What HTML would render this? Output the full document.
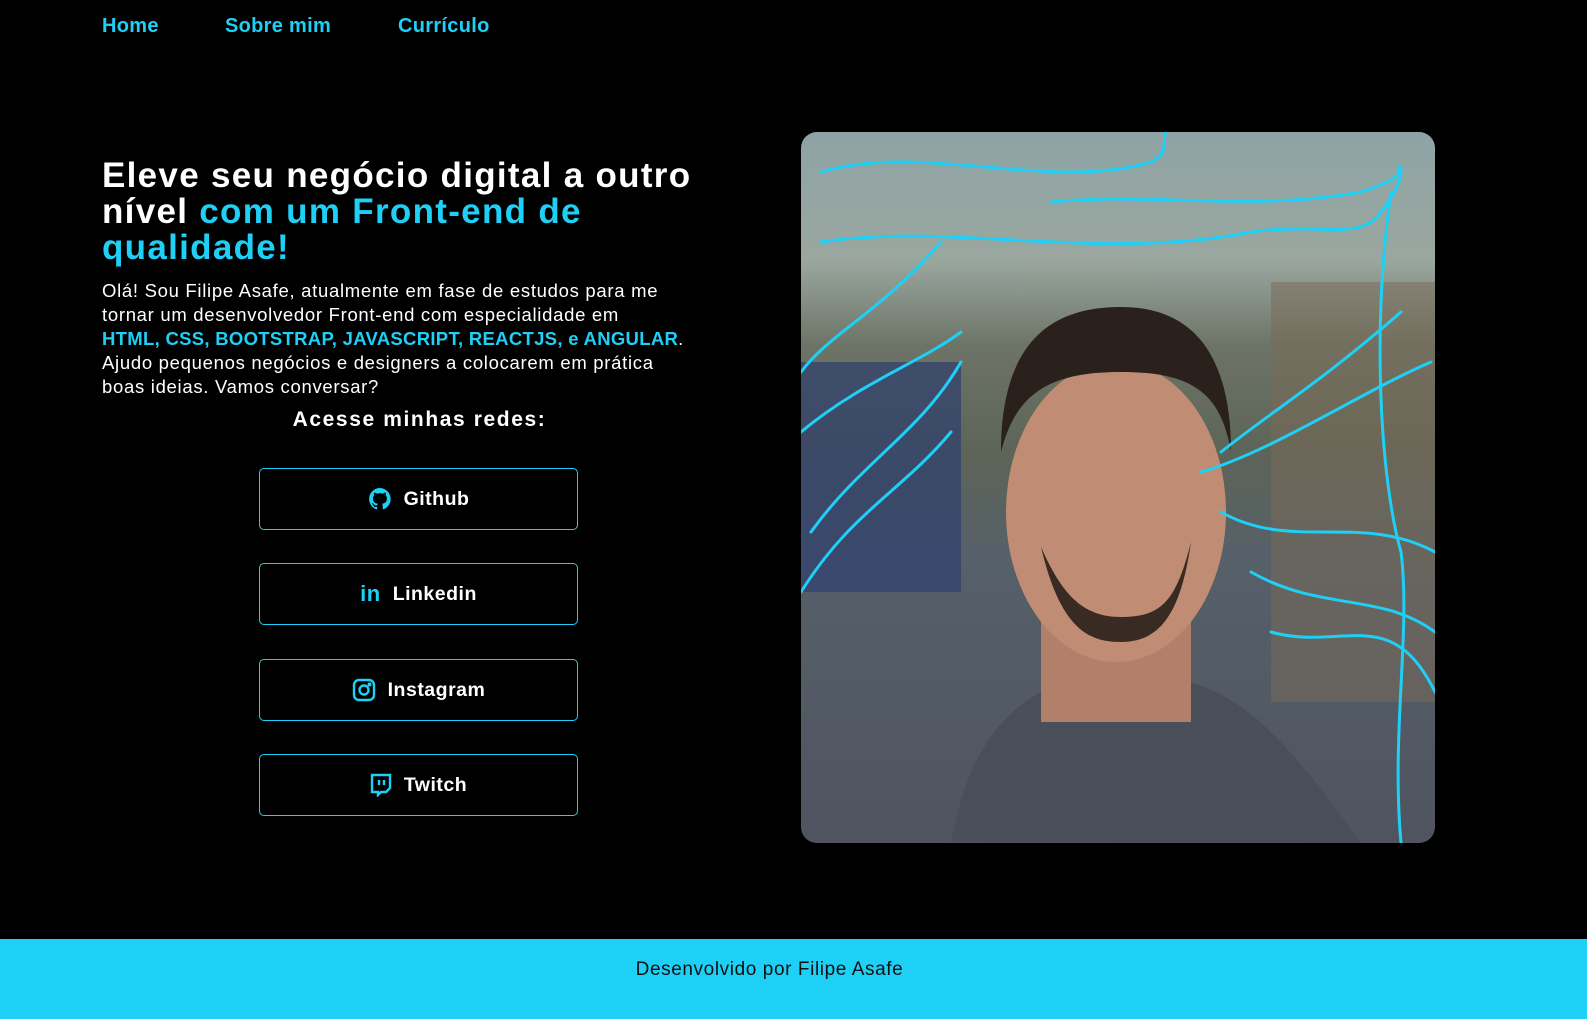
<!DOCTYPE html>
<html><head><meta charset="utf-8"><style>
*{margin:0;padding:0;box-sizing:border-box}
html{background:#1fd0f6}
body{width:1587px;height:995px;background:#000;font-family:"Liberation Sans",sans-serif;color:#fff;position:relative;overflow:hidden}
.nav a{position:absolute;top:15px;color:#1fd0f6;font-weight:bold;font-size:20px;text-decoration:none;letter-spacing:0.3px}
h1{position:absolute;left:102px;top:158px;font-size:35px;line-height:36px;font-weight:900;width:640px;letter-spacing:1.3px}
.c{color:#1fd0f6}
p.t{position:absolute;left:102px;top:279px;font-size:18.5px;line-height:24px;width:640px;letter-spacing:0.7px;white-space:nowrap}
h2{position:absolute;left:102px;width:635px;text-align:center;top:408px;font-size:21px;font-weight:bold;letter-spacing:1.6px}
.btn{position:absolute;left:259px;width:319px;height:62px;border:1.5px solid #1fd0f6;border-radius:5px;display:flex;align-items:center;justify-content:center;font-weight:bold;font-size:19.5px;gap:12px;letter-spacing:0.5px}
.photo{position:absolute;left:801px;top:132px;width:634px;height:711px;border-radius:16px;overflow:hidden;
background:linear-gradient(180deg,#8ea3a6 0%,#9aa79f 18%,#6d7467 30%,#5d6458 45%,#566069 60%,#4f5460 100%)}
footer{position:absolute;left:0;top:939px;height:80px;width:1587px;background:#1fd0f6;color:#111;text-align:center;font-size:19px;line-height:62px;padding-right:48px;letter-spacing:0.6px}
</style></head><body>
<div class="nav"><a style="left:102px">Home</a><a style="left:225px">Sobre mim</a><a style="left:398px">Currículo</a></div>
<h1>Eleve seu negócio digital a outro nível <span class="c">com um Front-end de qualidade!</span></h1>
<p class="t">Olá! Sou Filipe Asafe, atualmente em fase de estudos para me<br>tornar um desenvolvedor Front-end com especialidade em<br><b class="c" style="letter-spacing:0.3px">HTML, CSS, BOOTSTRAP, JAVASCRIPT, REACTJS, e ANGULAR</b>.<br>Ajudo pequenos negócios e designers a colocarem em prática<br>boas ideias. Vamos conversar?</p>
<h2>Acesse minhas redes:</h2>
<div class="btn" style="top:468px"><svg width="24" height="24" viewBox="0 0 24 24"><path fill="#1fd0f6" d="M12 1a11 11 0 0 0-3.5 21.4c.5.1.7-.2.7-.5v-2c-3 .7-3.7-1.3-3.7-1.3-.5-1.2-1.2-1.6-1.2-1.6-1-.7.1-.7.1-.7 1.1.1 1.7 1.1 1.7 1.1 1 1.7 2.6 1.2 3.2.9.1-.7.4-1.2.7-1.5-2.4-.3-5-1.2-5-5.4 0-1.2.4-2.2 1.1-2.9-.1-.3-.5-1.4.1-2.9 0 0 .9-.3 3 1.1a10 10 0 0 1 5.5 0c2.1-1.4 3-1.1 3-1.1.6 1.5.2 2.6.1 2.9.7.8 1.1 1.7 1.1 2.9 0 4.2-2.6 5.1-5 5.4.4.3.8 1 .8 2v3c0 .3.2.6.8.5A11 11 0 0 0 12 1z"/></svg>Github</div>
<div class="btn" style="top:563px"><span style="color:#1fd0f6;font-size:22px;font-weight:900">in</span>Linkedin</div>
<div class="btn" style="top:659px"><svg width="24" height="24" viewBox="0 0 24 24" fill="none" stroke="#1fd0f6" stroke-width="2.4"><rect x="2" y="2" width="20" height="20" rx="5"/><circle cx="12" cy="12" r="4.5"/><circle cx="17.5" cy="6.5" r=".8" fill="#1fd0f6"/></svg>Instagram</div>
<div class="btn" style="top:754px"><svg width="22" height="24" viewBox="0 0 22 24" fill="none" stroke="#1fd0f6" stroke-width="2.4"><path d="M2 2h18v13l-4 4h-5l-3 3v-3H2z"/><path d="M9 7v5M14 7v5"/></svg>Twitch</div>
<div class="photo">
<svg width="634" height="711" viewBox="0 0 634 711" style="position:absolute;left:0;top:0">
<rect x="0" y="230" width="160" height="230" fill="#2d3f6e" opacity=".7"/>
<rect x="470" y="150" width="164" height="420" fill="#7a6a55" opacity=".5"/>
<path d="M150 710 C170 600 220 560 280 545 L370 545 C440 560 480 600 560 711Z" fill="#4a4e58"/>
<rect x="240" y="480" width="150" height="110" fill="#b27f6a"/>
<ellipse cx="315" cy="380" rx="110" ry="150" fill="#c08d74"/>
<path d="M200 320 C200 200 260 175 320 175 C390 175 430 220 430 320 C420 260 390 240 320 240 C250 240 215 260 200 320Z" fill="#2a201c"/>
<path d="M240 415 C260 500 290 510 320 510 C360 510 380 480 390 410 C375 470 360 485 320 485 C280 485 260 460 240 415Z" fill="#3a2a24"/>
<g fill="none" stroke="#1fd0f6" stroke-width="3" stroke-linecap="round">
<path d="M20 40 C120 10 250 60 350 30 C370 20 360 10 365 0"/>
<path d="M20 110 C150 90 300 130 450 100 C520 90 560 110 580 80 C595 60 600 50 600 35"/>
<path d="M250 70 C350 60 450 80 560 60 C590 50 600 45 598 35"/>
<path d="M590 60 C570 200 580 350 600 420 C610 500 590 600 600 711"/>
<path d="M0 240 C30 200 80 180 140 110"/>
<path d="M0 300 C60 250 120 230 160 200"/>
<path d="M10 400 C60 330 120 300 160 230"/>
<path d="M0 460 C50 380 100 360 150 300"/>
<path d="M420 320 C470 280 520 250 600 180"/>
<path d="M400 340 C470 320 560 260 630 230"/>
<path d="M420 380 C490 420 560 380 634 420"/>
<path d="M450 440 C520 480 580 460 634 500"/>
<path d="M470 500 C540 520 590 470 634 560"/>
</g></svg>
</div>
<footer>Desenvolvido por Filipe Asafe</footer>
</body></html>
